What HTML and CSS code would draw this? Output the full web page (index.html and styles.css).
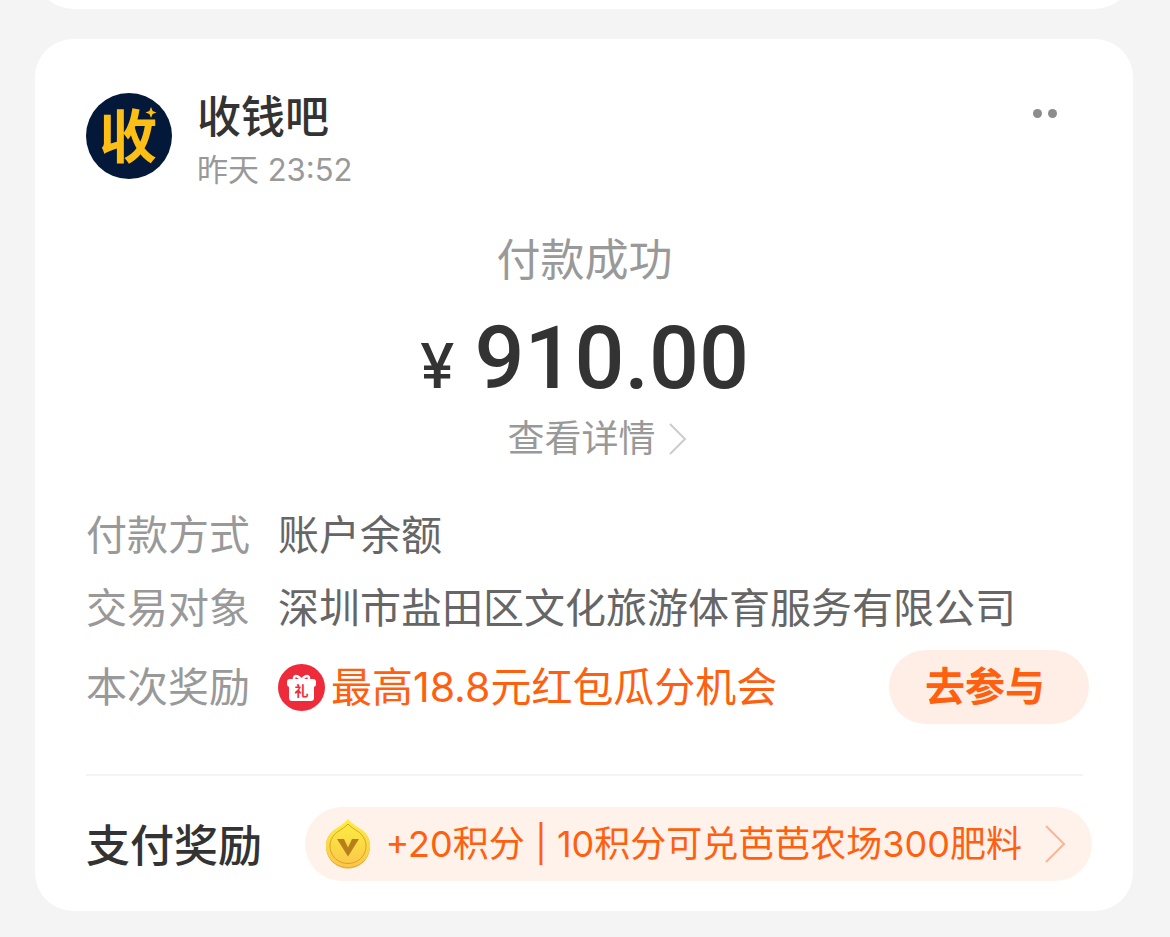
FILE: index.html
```html
<!DOCTYPE html>
<html lang="zh-CN">
<head>
    <meta charset="UTF-8">
    <meta name="viewport" content="width=device-width, initial-scale=1.0">
    <title>付款成功</title>
    <link rel="stylesheet" href="styles.css">
</head>
<body>
    <!-- End of the previous message -->
    <div class="card card-previous"></div>

    <main class="card">
        <header class="card-header">
            <svg class="avatar" viewBox="0 0 86 86" aria-hidden="true">
                <circle cx="43" cy="43" r="43" fill="#04193a"/>
                <text class="avatar-text" x="42" y="65" text-anchor="middle">收</text>
                <path d="M65 14l1.600 3.900 3.900 1.600-3.900 1.600L65 25l-1.600-3.900-3.900-1.600 3.900-1.600z" fill="#fdbf14"/>
            </svg>
            <div class="merchant">
                <h1 class="merchant-name">收钱吧</h1>
                <time class="time">昨天 23:52</time>
            </div>
            <button class="more" type="button" aria-label="更多">
                <span class="dot"></span>
                <span class="dot"></span>
            </button>
        </header>

        <section class="summary">
            <p class="status">付款成功</p>
            <p class="amount"><span class="currency">¥</span>910.00</p>
            <a class="detail-link" href="#">查看详情
                <svg class="arrow" viewBox="0 0 20 34" aria-hidden="true"><path d="M2 2l15 15L2 32"/></svg>
            </a>
        </section>

        <dl class="info">
            <div class="row">
                <dt>付款方式</dt>
                <dd>账户余额</dd>
            </div>
            <div class="row">
                <dt>交易对象</dt>
                <dd>深圳市盐田区文化旅游体育服务有限公司</dd>
            </div>
            <div class="row row-reward">
                <dt>本次奖励</dt>
                <dd class="reward">
                    <svg class="gift" viewBox="0 0 47 47" aria-hidden="true">
                        <circle cx="23.500" cy="23.500" r="23.500" fill="#ee2b3b"/>
                        <path d="M23.500 17c-1-4-7-7-7.500-3 0 2 1 3 2 3M23.500 17c1-4 7-7 7.500-3 0 2-1 3-2 3" fill="none" stroke="#fff" stroke-width="2.500" stroke-linecap="round"/>
                        <rect x="9" y="15" width="29" height="8" rx="3" fill="#fff"/>
                        <rect x="11" y="17" width="25" height="20" rx="3" fill="#fff"/>
                        <text class="gift-text" x="23.500" y="32" text-anchor="middle">礼</text>
                    </svg>
                    <span>最高18.8元红包瓜分机会</span>
                </dd>
                <dd class="action"><button class="join-btn" type="button">去参与</button></dd>
            </div>
        </dl>

        <footer class="card-footer">
            <h2 class="footer-title">支付奖励</h2>
            <a class="points" href="#">
                <svg class="coin" viewBox="0 0 46 50" aria-hidden="true">
                    <defs>
                        <linearGradient id="gold" x1="0" y1="0" x2="0" y2="1">
                            <stop offset="0" stop-color="#fbf03f"/>
                            <stop offset="1" stop-color="#fbc64a"/>
                        </linearGradient>
                    </defs>
                    <path d="M23 1C27 6 32 8 37 11.500C42 15 45 20 45 27.500C45 40 35 49.500 23 49.500S1 40 1 27.500C1 20 4 15 9 11.500C14 8 19 6 23 1z" fill="#e9ad3a"/>
                    <path d="M23 0C27 5 32 7.500 37 11C42 15 45 20 45 27C45 39 35 48 23 48S1 39 1 27C1 20 4 15 9 11C14 7.500 19 5 23 0z" fill="url(#gold)"/>
                    <path d="M23 5C26 8 29 10 33 12.500C38 16 41 21 41 27C41 37 33 44.500 23 44.500S5 37 5 27C5 21 8 16 13 12.500C17 10 20 8 23 5z" fill="none" stroke="#d9a42c" stroke-width="1"/>
                    <path d="M12 20h7l4 8.500 4-8.500h7L23 37.500z" fill="#b67f1c"/>
                </svg>
                <span class="points-text">+20积分 | 10积分可兑芭芭农场300肥料</span>
                <svg class="arrow arrow-points" viewBox="0 0 22 40" aria-hidden="true"><path d="M2 2l18 18L2 38"/></svg>
            </a>
        </footer>
    </main>
</body>
</html>
```
FILE: styles.css
```css
* {
    box-sizing: border-box;
}

body {
    margin: 0;
    padding: 0 37px 26px 35px;
    background-color: #f4f4f4;
    color: #333;
    font-family: Inter, "Noto Sans CJK SC", sans-serif;
    overflow-x: hidden;
}

h1, h2, p, dl, dd {
    margin: 0;
}

a {
    text-decoration: none;
}

button {
    border: 0;
    font-family: inherit;
    cursor: pointer;
}

.card {
    padding: 54px 50px 30px 51px;
    background-color: #fff;
    border-radius: 38px;
}

/* only the rounded bottom edge stays on screen */
.card-previous {
    height: 80px;
    margin: -71px 0 30px;
    padding: 0;
}

/* Header */
.card-header {
    display: flex;
    align-items: flex-start;
}

.avatar {
    width: 86px;
    height: 86px;
    flex: none;
}

.avatar-text {
    fill: #fdbf14;
    font-size: 58px;
    font-weight: 700;
}

.merchant {
    flex: 1;
    margin-left: 25px;
}

.merchant-name {
    font-size: 44px;
    font-weight: 500;
    line-height: 48px;
}

.time {
    display: block;
    margin-top: 9px;
    color: #999;
    font-size: 31px;
    line-height: 40px;
}

.more {
    display: flex;
    gap: 6px;
    margin-right: 16px;
    padding: 16px 10px;
    background: none;
}

.dot {
    width: 9px;
    height: 9px;
    border-radius: 50%;
    background-color: #8c8c8c;
}

/* Payment summary */
.summary {
    display: flex;
    flex-direction: column;
    align-items: center;
    margin-top: 40px;
    color: #999;
}

.status {
    font-size: 44px;
    line-height: 60px;
}

.amount {
    display: flex;
    align-items: baseline;
    gap: 20px;
    margin-top: 18px;
    color: #333;
    font-family: Roboto, sans-serif;
    font-size: 88px;
    font-weight: 500;
    line-height: 100px;
}

.currency {
    font-family: Inter, sans-serif;
    font-size: 62px;
    line-height: 60px;
}

.detail-link {
    display: flex;
    align-items: center;
    gap: 12px;
    margin-top: 6px;
    padding-left: 26px;
    color: #999;
    font-size: 37px;
    line-height: 50px;
}

.arrow {
    width: 20px;
    height: 34px;
    flex: none;
    fill: none;
    stroke: #ccc;
    stroke-width: 2;
}

/* Payment info */
.info {
    display: flex;
    flex-direction: column;
    gap: 11px;
    margin-top: 40px;
    font-size: 41px;
    line-height: 62px;
}

.row {
    display: flex;
    align-items: center;
}

.row dt {
    flex: none;
    margin-right: 28px;
    color: #999;
}

.row dd {
    color: #666;
}

.row-reward {
    margin-right: -6px;
}

.row .reward {
    display: flex;
    align-items: center;
    gap: 6px;
    color: #ff6010;
}

.gift {
    width: 47px;
    height: 47px;
    flex: none;
}

.gift-text {
    fill: #ee2b3b;
    font-size: 14px;
    font-weight: 700;
}

.action {
    display: flex;
    margin-left: auto;
}

.join-btn {
    min-width: 200px;
    padding: 0 36px;
    border-radius: 37px;
    background-color: #ffeee6;
    color: #ff6010;
    font-size: 40px;
    font-weight: 700;
    line-height: 74px;
    text-align: left;
}

/* Footer */
.card-footer {
    display: flex;
    align-items: center;
    justify-content: space-between;
    margin-top: 50px;
    padding-top: 31px;
    border-top: 2px solid #f4f4f4;
}

.footer-title {
    padding-top: 4px;
    font-size: 44px;
    font-weight: 500;
    line-height: 60px;
}

.points {
    display: flex;
    align-items: center;
    margin-right: -9px;
    padding: 0 26px 0 20px;
    border-radius: 37px;
    background-color: #fef2eb;
    color: #ff6010;
    font-size: 36px;
    line-height: 74px;
}

.coin {
    width: 46px;
    height: 50px;
    flex: none;
}

.points-text {
    margin: 0 22px 0 14px;
}

.arrow-points {
    width: 22px;
    height: 40px;
    stroke: #f9b596;
}
```
